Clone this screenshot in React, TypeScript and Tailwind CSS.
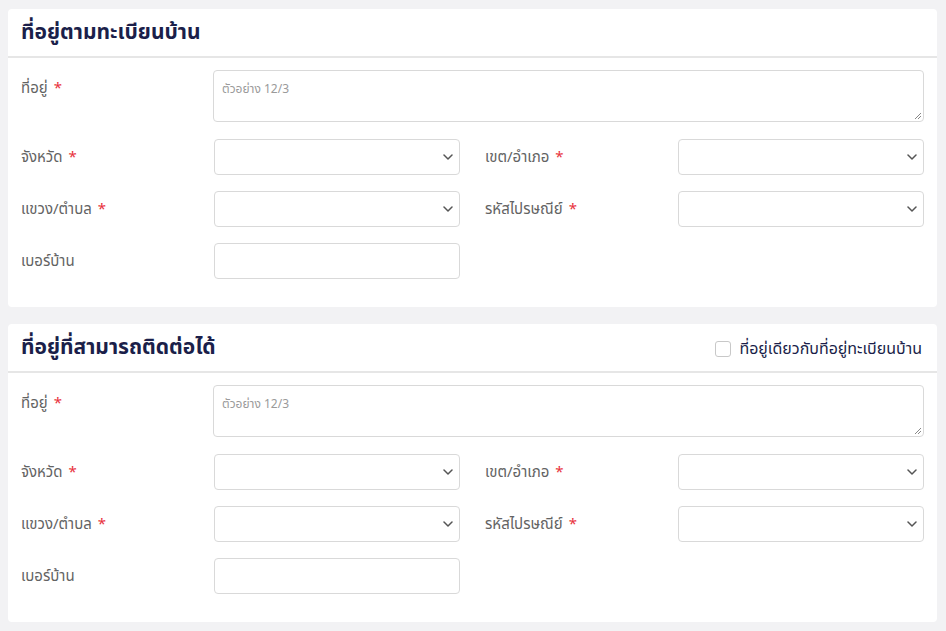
import React from "react";

const font = { fontFamily: '"Noto Sans Thai", "Noto Sans Thai Looped", "Noto Sans", "DejaVu Sans", sans-serif' };

function Chevron() {
  return (
    <svg width="10" height="7" viewBox="0 0 10 7" className="absolute right-[6px] top-1/2 -translate-y-1/2" fill="none">
      <path d="M1 1.5 L5 5.5 L9 1.5" stroke="#555" strokeWidth="1.5" strokeLinecap="round" strokeLinejoin="round" />
    </svg>
  );
}

function Req() {
  return <span className="ml-[6px] text-[#e8323c]">*</span>;
}

function Label({ text, req }: { text: string; req?: boolean }) {
  return (
    <div className="w-[193px] shrink-0 text-[15px] text-[#636363] flex items-center h-[36px] pt-[2px]">
      {text}
      {req && <Req />}
    </div>
  );
}

function Select() {
  return (
    <div className="relative w-[246px] h-[36px] rounded-[4px] border border-[#d9d9d9] bg-white">
      <Chevron />
    </div>
  );
}

function Input() {
  return <div className="w-[246px] h-[36px] rounded-[4px] border border-[#d9d9d9] bg-white" />;
}

function Field({ text, req, input }: { text: string; req?: boolean; input?: boolean }) {
  return (
    <div className="flex w-[439px]">
      <Label text={text} req={req} />
      {input ? <Input /> : <Select />}
    </div>
  );
}

function Card({ title, check }: { title: string; check?: boolean }) {
  return (
    <div className="bg-white rounded-[4px] w-[929px] h-[298px]">
      <div className="h-[49px] border-b-2 border-[#e6e6e6] flex items-center justify-between pl-[13px] pr-[15px]">
        <div className="text-[21px] font-bold text-[#1b1f4a] leading-none">{title}</div>
        {check && (
          <div className="flex items-center gap-[8px] mt-[2px]">
            <div className="w-[16px] h-[16px] rounded-[3px] border border-[#c8c8c8] bg-white" />
            <span className="text-[16px] text-[#1b1f4a]">ที่อยู่เดียวกับที่อยู่ทะเบียนบ้าน</span>
          </div>
        )}
      </div>
      <div className="pl-[13px] pr-[13px] pt-[12px] flex flex-col">
        <div className="flex">
          <div className="w-[192px] shrink-0 text-[15px] text-[#636363] pt-[8px]">
            ที่อยู่<Req />
          </div>
          <div className="relative flex-1 h-[52px] rounded-[4px] border border-[#d9d9d9] bg-white px-[8px] pt-[5px]">
            <span className="text-[12px] text-[#9a9a9a]">ตัวอย่าง 12/3</span>
            <svg width="8" height="8" viewBox="0 0 8 8" className="absolute right-[1px] bottom-[1px]">
              <path d="M7 1 L1 7 M7 4 L4 7" stroke="#888" strokeWidth="1" />
            </svg>
          </div>
        </div>
        <div className="flex gap-[25px] mt-[17px]">
          <Field text="จังหวัด" req />
          <Field text="เขต/อำเภอ" req />
        </div>
        <div className="flex gap-[25px] mt-[16px]">
          <Field text="แขวง/ตำบล" req />
          <Field text="รหัสไปรษณีย์" req />
        </div>
        <div className="flex gap-[25px] mt-[16px]">
          <Field text="เบอร์บ้าน" input />
        </div>
      </div>
    </div>
  );
}

export default function App() {
  return (
    <div className="w-[946px] h-[631px] bg-[#f2f2f4] pl-[8px] pt-[9px] flex flex-col gap-[17px]" style={font}>
      <Card title="ที่อยู่ตามทะเบียนบ้าน" />
      <Card title="ที่อยู่ที่สามารถติดต่อได้" check />
    </div>
  );
}
